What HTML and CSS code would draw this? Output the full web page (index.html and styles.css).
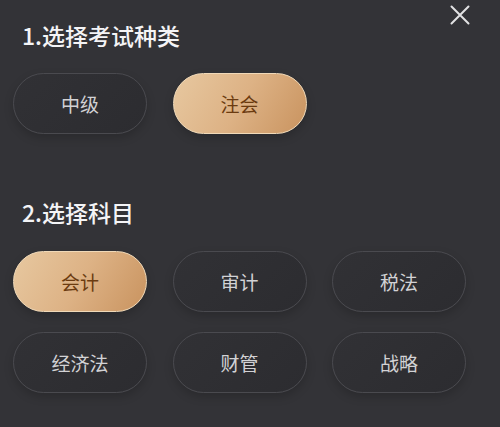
FILE: index.html
```html
<!DOCTYPE html>
<html lang="zh-CN">
<head>
<meta charset="utf-8">
<title>选择科目</title>
<link rel="stylesheet" href="styles.css">
</head>
<body>
<div class="panel">
  <button class="close" aria-label="关闭">
    <svg width="20" height="20" viewBox="0 0 20 20"><path d="M1.5 1.5 L18.5 18.5 M18.5 1.5 L1.5 18.5" stroke="#e2e2e4" stroke-width="2" stroke-linecap="round" fill="none"/></svg>
  </button>
  <h2 class="title title-first">1.选择考试种类</h2>
  <div class="grid">
    <div class="chip">中级</div>
    <div class="chip active">注会</div>
  </div>
  <h2 class="title title-second">2.选择科目</h2>
  <div class="grid">
    <div class="chip active">会计</div>
    <div class="chip">审计</div>
    <div class="chip">税法</div>
    <div class="chip">经济法</div>
    <div class="chip">财管</div>
    <div class="chip">战略</div>
  </div>
</div>
</body>
</html>
```
FILE: styles.css
```css
html, body {
  margin: 0;
  padding: 0;
  background: #333337;
  height: 100%;
}
body {
  font-family: "Noto Sans CJK SC", "Noto Sans", sans-serif;
  overflow: hidden;
}
.panel {
  position: relative;
  padding: 20px 0 0 13px;
}
.close {
  position: absolute;
  top: 5px;
  right: 30px;
  width: 20px;
  height: 20px;
  padding: 0;
  border: 0;
  background: none;
  display: flex;
}
.title {
  margin: 0 0 0 9px;
  font-size: 23px;
  line-height: 30px;
  font-weight: 500;
  color: #f4f4f6;
}
.title-first {
  margin-bottom: 23px;
}
.title-second {
  margin-top: 63px;
  margin-bottom: 24px;
}
.grid {
  display: grid;
  grid-template-columns: repeat(3, 134px);
  column-gap: 25.5px;
  row-gap: 20px;
}
.chip {
  height: 61px;
  box-sizing: border-box;
  border-radius: 31px;
  border: 1px solid #4a4a4f;
  background: linear-gradient(135deg, #313135 0%, #2c2c30 100%);
  color: #d2d2d5;
  font-size: 19px;
  display: flex;
  align-items: center;
  justify-content: center;
  box-shadow: 0 4px 10px rgba(0, 0, 0, 0.18);
}
.chip.active {
  border: 1px solid #f0d9b8;
  background: linear-gradient(120deg, #e7c8a0 0%, #ddb285 50%, #c9935f 100%);
  color: #6b3b10;
}
```
